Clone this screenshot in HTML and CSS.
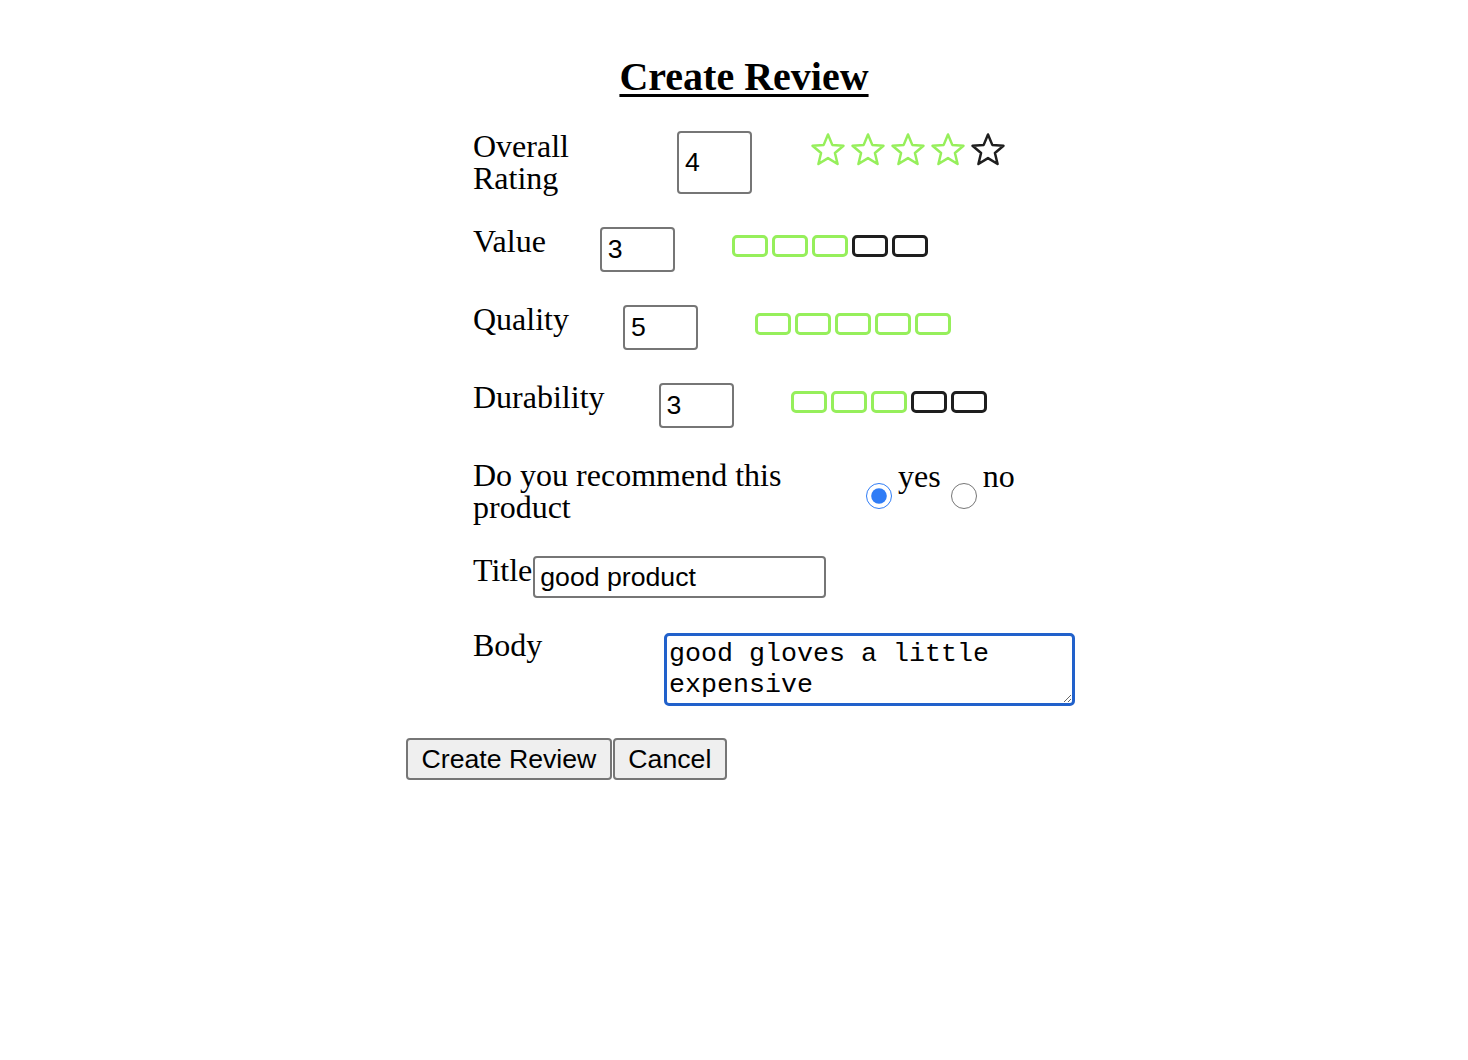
FILE: index.html
```html
<!DOCTYPE html>
<html lang="en">
<head>
<meta charset="utf-8">
<title>Create Review</title>
<link rel="stylesheet" href="styles.css">
</head>
<body>
<div class="page">
  <h1 class="heading">Create Review</h1>
  <form class="form">
    <div class="fields">
      <div class="row">
        <label class="label label-overall">Overall Rating</label>
        <input class="num num-tall" type="text" value="4">
        <div class="icons icons-stars">
          <svg class="ico on" viewBox="0 0 40 40"><path d="M20 4.5 L24.29 14.89 L35.5 15.76 L26.94 23.06 L29.58 33.99 L20 28.1 L10.42 33.99 L13.06 23.06 L4.5 15.76 L15.71 14.89 Z"/></svg>
          <svg class="ico on" viewBox="0 0 40 40"><path d="M20 4.5 L24.29 14.89 L35.5 15.76 L26.94 23.06 L29.58 33.99 L20 28.1 L10.42 33.99 L13.06 23.06 L4.5 15.76 L15.71 14.89 Z"/></svg>
          <svg class="ico on" viewBox="0 0 40 40"><path d="M20 4.5 L24.29 14.89 L35.5 15.76 L26.94 23.06 L29.58 33.99 L20 28.1 L10.42 33.99 L13.06 23.06 L4.5 15.76 L15.71 14.89 Z"/></svg>
          <svg class="ico on" viewBox="0 0 40 40"><path d="M20 4.5 L24.29 14.89 L35.5 15.76 L26.94 23.06 L29.58 33.99 L20 28.1 L10.42 33.99 L13.06 23.06 L4.5 15.76 L15.71 14.89 Z"/></svg>
          <svg class="ico off" viewBox="0 0 40 40"><path d="M20 4.5 L24.29 14.89 L35.5 15.76 L26.94 23.06 L29.58 33.99 L20 28.1 L10.42 33.99 L13.06 23.06 L4.5 15.76 L15.71 14.89 Z"/></svg>
        </div>
      </div>

      <div class="row">
        <label class="label">Value</label>
        <input class="num" type="text" value="3">
        <div class="icons icons-boxes">
          <svg class="ico on" viewBox="0 0 40 40"><rect x="3.5" y="10.5" width="33" height="19" rx="3.5"/></svg>
          <svg class="ico on" viewBox="0 0 40 40"><rect x="3.5" y="10.5" width="33" height="19" rx="3.5"/></svg>
          <svg class="ico on" viewBox="0 0 40 40"><rect x="3.5" y="10.5" width="33" height="19" rx="3.5"/></svg>
          <svg class="ico off" viewBox="0 0 40 40"><rect x="3.5" y="10.5" width="33" height="19" rx="3.5"/></svg>
          <svg class="ico off" viewBox="0 0 40 40"><rect x="3.5" y="10.5" width="33" height="19" rx="3.5"/></svg>
        </div>
      </div>

      <div class="row">
        <label class="label">Quality</label>
        <input class="num" type="text" value="5">
        <div class="icons icons-boxes">
          <svg class="ico on" viewBox="0 0 40 40"><rect x="3.5" y="10.5" width="33" height="19" rx="3.5"/></svg>
          <svg class="ico on" viewBox="0 0 40 40"><rect x="3.5" y="10.5" width="33" height="19" rx="3.5"/></svg>
          <svg class="ico on" viewBox="0 0 40 40"><rect x="3.5" y="10.5" width="33" height="19" rx="3.5"/></svg>
          <svg class="ico on" viewBox="0 0 40 40"><rect x="3.5" y="10.5" width="33" height="19" rx="3.5"/></svg>
          <svg class="ico on" viewBox="0 0 40 40"><rect x="3.5" y="10.5" width="33" height="19" rx="3.5"/></svg>
        </div>
      </div>

      <div class="row">
        <label class="label">Durability</label>
        <input class="num" type="text" value="3">
        <div class="icons icons-boxes">
          <svg class="ico on" viewBox="0 0 40 40"><rect x="3.5" y="10.5" width="33" height="19" rx="3.5"/></svg>
          <svg class="ico on" viewBox="0 0 40 40"><rect x="3.5" y="10.5" width="33" height="19" rx="3.5"/></svg>
          <svg class="ico on" viewBox="0 0 40 40"><rect x="3.5" y="10.5" width="33" height="19" rx="3.5"/></svg>
          <svg class="ico off" viewBox="0 0 40 40"><rect x="3.5" y="10.5" width="33" height="19" rx="3.5"/></svg>
          <svg class="ico off" viewBox="0 0 40 40"><rect x="3.5" y="10.5" width="33" height="19" rx="3.5"/></svg>
        </div>
      </div>

      <div class="row">
        <label class="label label-recommend">Do you recommend this product</label>
        <input class="radio" type="radio" name="rec" checked>
        <span class="opt">yes</span>
        <input class="radio" type="radio" name="rec">
        <span class="opt">no</span>
      </div>

      <div class="row">
        <label class="label">Title</label>
        <input class="text-input" type="text" value="good product">
      </div>

      <div class="row">
        <label class="label label-body">Body</label>
        <textarea class="body-input">good gloves a little expensive</textarea>
      </div>
    </div>

    <div class="actions">
      <button type="button" class="btn">Create Review</button>
      <button type="button" class="btn">Cancel</button>
    </div>
  </form>
</div>
</body>
</html>
```

FILE: styles.css
```css
html, body {
  margin: 0;
  padding: 0;
  background: #ffffff;
}

body {
  font-family: "Liberation Serif", "Times New Roman", serif;
  color: #000;
}

.page {
  width: 676px;
  margin: 0 auto;
  padding-left: 20px;
  padding-top: 54px;
}

.heading {
  margin: 0;
  text-align: center;
  font-size: 40px;
  font-weight: bold;
  line-height: 46px;
  text-decoration: underline;
  text-decoration-thickness: 3px;
  text-underline-offset: 4px;
}

.form {
  margin: 30px 0 0 0;
}

.fields {
  display: flex;
  flex-direction: column;
  gap: 31px;
  padding-left: 67px;
}

.row {
  display: flex;
  align-items: flex-start;
}

.label {
  flex: none;
  font-size: 32px;
  line-height: 32px;
}

.label-overall {
  width: 150px;
}

.label-recommend {
  width: 383px;
}

.label-body {
  width: 191px;
}

.num {
  flex: none;
  box-sizing: border-box;
  width: 75px;
  height: 45px;
  margin: 2px 0 0 54px;
  padding: 0 6px;
  border: 2px solid #767676;
  border-radius: 4px;
  font-family: "Liberation Sans", Arial, sans-serif;
  font-size: 26.67px;
  color: #000;
  background: #fff;
}

.num-tall {
  height: 63px;
  margin-top: 1px;
}

.icons {
  display: flex;
  flex: none;
}

.icons-stars {
  margin-left: 56px;
}

.icons-boxes {
  margin-left: 55px;
  margin-top: 1px;
}

.ico {
  width: 40px;
  height: 40px;
  display: block;
  fill: none;
  stroke-linejoin: round;
}

.icons-stars .ico {
  stroke-width: 2.5;
}

.icons-boxes .ico {
  stroke-width: 3;
}

.ico.on {
  stroke: #96ef5b;
}

.ico.off {
  stroke: #1e1e1e;
}

.radio {
  flex: none;
  align-self: center;
  width: 26px;
  height: 26px;
  margin: 9px 6px 0 10px;
  accent-color: #2f7cf6;
}

.opt {
  font-size: 32px;
  line-height: 32px;
  margin-top: 1px;
}

.text-input {
  flex: none;
  box-sizing: border-box;
  width: 293px;
  height: 42px;
  margin: 2px 0 0 1px;
  padding: 0 5px;
  border: 2px solid #767676;
  border-radius: 4px;
  font-family: "Liberation Sans", Arial, sans-serif;
  font-size: 26.67px;
  color: #000;
  background: #fff;
}

.body-input {
  flex: none;
  box-sizing: border-box;
  width: 411px;
  height: 73px;
  margin: 4px 0 0 0;
  padding: 3px 2px 2px 2px;
  border: 3px solid #2161cb;
  border-radius: 5px;
  outline: none;
  font-family: "Liberation Mono", "Courier New", monospace;
  font-size: 26.67px;
  line-height: 31px;
  color: #000;
  background: #fff;
  overflow: hidden;
}

.actions {
  display: flex;
  gap: 1px;
  margin-top: 32px;
}

.btn {
  box-sizing: border-box;
  height: 42px;
  padding: 0 13.5px;
  border: 2px solid #767676;
  border-radius: 4px;
  background: #efefef;
  font-family: "Liberation Sans", Arial, sans-serif;
  font-size: 26.67px;
  color: #000;
}
```
